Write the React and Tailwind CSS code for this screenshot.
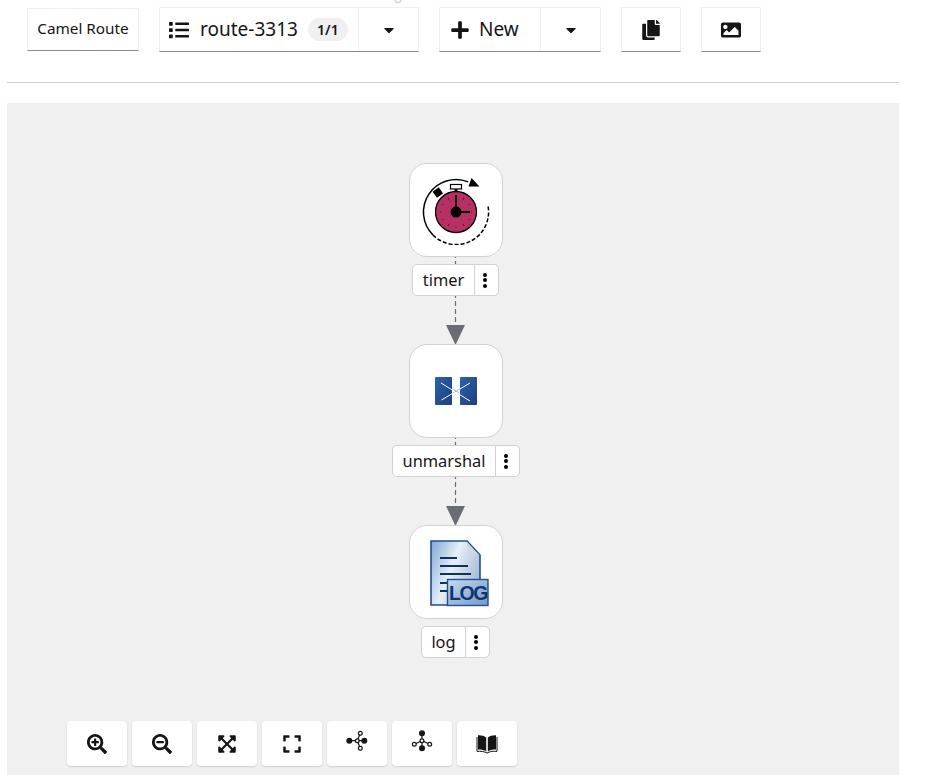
import React from 'react';
import {
  FaList,
  FaCaretDown,
  FaPlus,
  FaCopy,
  FaImage,
  FaSearchPlus,
  FaSearchMinus,
  FaExpandArrowsAlt,
  FaExpand,
} from 'react-icons/fa';

const TimerIcon = () => (
  <svg width="70" height="70" viewBox="0 0 70 70" fill="none">
    <path d="M47.2 6.9 A32.5 32.5 0 0 0 12 60" stroke="#000" strokeWidth="1.5" />
    <path d="M12 60 A32.5 32.5 0 0 0 67 31" stroke="#000" strokeWidth="1.5" strokeDasharray="4 2" />
    <polygon points="58.5,11.5 50.5,3 47.5,11.5" fill="#000" />
    <rect x="29.5" y="9.5" width="11" height="4.5" fill="#fff" stroke="#000" strokeWidth="1.2" />
    <rect x="33.5" y="14" width="3" height="3" fill="#000" />
    <rect x="13" y="14" width="7.5" height="7.5" fill="#000" transform="rotate(-35 16.5 17.5)" />
    <circle cx="35" cy="37" r="20.5" fill="#b83063" stroke="#000" strokeWidth="1.3" />
    <path d="M19 37h1.5M49.5 37h1.5M27 23l1 2M43 23l-1 2M27 51l1-2M43 51l-1-2M21 29l1.5 1M49 29l-1.5 1M21 45l1.5-1M49 45l-1.5-1M35 51.5v1.5" stroke="#3a0d20" strokeWidth="0.7" />
    <path d="M35 37V20M35 37H49" stroke="#000" strokeWidth="1.8" />
    <circle cx="35" cy="37" r="5.5" fill="#000" />
  </svg>
);

const UnmarshalIcon = () => (
  <svg width="42" height="28" viewBox="0 0 42 28" fill="none">
    <defs>
      <linearGradient id="um" x1="0" y1="0" x2="1" y2="1">
        <stop offset="0" stopColor="#2b62ae" />
        <stop offset="1" stopColor="#1c3f80" />
      </linearGradient>
    </defs>
    <rect x="0" y="0" width="17" height="28" rx="1" fill="url(#um)" />
    <rect x="25" y="0" width="17" height="28" rx="1" fill="url(#um)" />
    <path d="M6 6L35 24M35 6L6.5 23" stroke="#fff" strokeWidth="1" />
    <path d="M17.5 12l7 4M24.5 12l-7 4" stroke="#5b86c4" strokeWidth="1" strokeDasharray="1 1" />
  </svg>
);

const LogIcon = () => (
  <svg width="60" height="68" viewBox="0 0 60 68" fill="none" className="ml-[8px] mt-[1px]">
    <defs>
      <linearGradient id="doc" x1="0" y1="0" x2="1" y2="0.5">
        <stop offset="0" stopColor="#7fa6d3" />
        <stop offset="0.5" stopColor="#e6f0f9" />
        <stop offset="1" stopColor="#a9bdd4" />
      </linearGradient>
      <linearGradient id="tag" x1="0" y1="0" x2="1" y2="1">
        <stop offset="0" stopColor="#c6daef" />
        <stop offset="1" stopColor="#7399c6" />
      </linearGradient>
    </defs>
    <path d="M1 2H37L50 16V66H1Z" fill="url(#doc)" stroke="#1f4f94" strokeWidth="1.6" />
    <path d="M37 3V11Q38 16 49 16" fill="#cfd9e4" />
    <path d="M10 19H27M10 27H38M10 35H41M10 44H22M10 52H22" stroke="#12305f" strokeWidth="2" />
    <rect x="17.5" y="40.5" width="40.5" height="26" fill="url(#tag)" stroke="#1f4f94" strokeWidth="1.4" />
    <text x="38" y="61" textAnchor="middle" fontFamily="'Liberation Sans', sans-serif" fontWeight="700" fontSize="19.5" fill="#0f3670" letterSpacing="-1.4">LOG</text>
  </svg>
);

// the two layout buttons in the canvas controls
const LayoutHorizontalIcon = () => (
  <svg width="22" height="22" viewBox="0 0 22 22" fill="none" stroke="#151515" strokeWidth="1.2" className="mb-[5px]">
    <path d="M3.3 10.7H18.3M11.3 10.7L14.3 3.3M11.3 10.7L14.3 18.3" />
    <circle cx="3.3" cy="10.7" r="2.4" fill="#151515" />
    <circle cx="18.3" cy="10.7" r="2.4" fill="#151515" />
    <circle cx="11.3" cy="10.7" r="1.9" fill="#fff" />
    <circle cx="14.3" cy="3.3" r="1.9" fill="#fff" />
    <circle cx="14.3" cy="18.3" r="1.9" fill="#fff" />
  </svg>
);

const LayoutVerticalIcon = () => (
  <svg width="22" height="22" viewBox="0 0 22 22" fill="none" stroke="#151515" strokeWidth="1.2" className="mb-[5px]">
    <path d="M11 3.3V18.3M11 10.7L3.3 14.3M11 10.7L18.7 14.3" />
    <circle cx="11" cy="3.3" r="2.4" fill="#151515" />
    <circle cx="11" cy="18.3" r="2.4" fill="#151515" />
    <circle cx="11" cy="10.7" r="1.9" fill="#fff" />
    <circle cx="3.3" cy="14.3" r="1.9" fill="#fff" />
    <circle cx="18.7" cy="14.3" r="1.9" fill="#fff" />
  </svg>
);

const BookIcon = () => (
  <svg width="22" height="20" viewBox="0 0 22 20" fill="none">
    <path d="M10.2 3.5C8 1.6 5 1 2 1.2V15.5C5 15.4 8 16 10.2 17.5Z" fill="#151515" />
    <path d="M11.8 3.5C14 1.6 17 1 20 1.2V15.5C17 15.4 14 16 11.8 17.5Z" fill="#151515" />
    <path d="M1 3V17.4C4.5 17 8 17.4 11 19C14 17.4 17.5 17 21 17.4V3" stroke="#151515" strokeWidth="1" />
  </svg>
);

const KebabDots = () => (
  <span className="flex flex-col gap-[1.5px]">
    <span className="w-[4px] h-[4px] rounded-full bg-black" />
    <span className="w-[4px] h-[4px] rounded-full bg-black" />
    <span className="w-[4px] h-[4px] rounded-full bg-black" />
  </span>
);

const NodeLabel = ({ name, className }) => (
  <div className={`absolute h-[32px] flex bg-white border border-[#d2d2d2] rounded-[5px] text-[16.4px] text-[#151515] ${className}`}>
    <span className="flex-1 flex items-center justify-center leading-none">{name}</span>
    <span className="w-[24px] pr-[3px] flex items-center justify-center border-l border-[#d2d2d2]">
      <KebabDots />
    </span>
  </div>
);

const NodeBox = ({ className, children }) => (
  <div className={`absolute w-[94px] h-[94px] bg-white border-[1.5px] border-[#d2d2d2] rounded-[18px] flex items-center justify-center ${className}`}>
    {children}
  </div>
);

const ToolButton = ({ className, children }) => (
  <div className={`h-[45px] flex bg-white border border-[#f0f0f0] border-b-[#8a8d90] text-[#151515] ${className}`}>
    {children}
  </div>
);

const Control = ({ children }) => (
  <button type="button" className="w-[60px] h-[45px] flex items-center justify-center bg-white rounded-[4px] shadow-[0_1px_2px_rgba(3,3,3,0.14)] text-[#151515]">
    {children}
  </button>
);

export default function App() {
  return (
    <div className="relative w-[926px] h-[775px] overflow-hidden bg-white font-['Noto_Sans',sans-serif]">
      <div className="absolute left-[394px] top-[-5px] w-[8px] h-[8px] rounded-full bg-white border border-[#bbbbbb]" />

      <div className="h-[82px] pl-[27px] pt-[7px] flex items-start gap-[20px] text-[19px]">
        <div className="mt-px w-[112px] h-[43px] pb-[2px] flex items-center justify-center bg-white border border-[#f0f0f0] border-b-[#8a8d90] text-[15.3px] text-[#151515]">
          Camel Route
        </div>

        <ToolButton className="w-[260px]">
          <div className="w-[199px] flex items-center border-r border-[#f0f0f0] pl-[9px]">
            <FaList className="text-[20px] text-[#151515] shrink-0" />
            <span className="ml-[11px]">route-3313</span>
            <span className="ml-[10px] w-[40px] h-[23px] flex items-center justify-center rounded-full bg-[#f0f0f0] text-[14px] font-semibold">1/1</span>
          </div>
          <div className="flex-1 flex items-center justify-center">
            <FaCaretDown className="text-[16px]" />
          </div>
        </ToolButton>

        <ToolButton className="w-[162px]">
          <div className="w-[101px] flex items-center border-r border-[#f0f0f0] pl-[10px]">
            <FaPlus className="text-[20px] shrink-0" />
            <span className="ml-[9px]">New</span>
          </div>
          <div className="flex-1 flex items-center justify-center">
            <FaCaretDown className="text-[16px]" />
          </div>
        </ToolButton>

        <ToolButton className="w-[60px] items-center justify-center">
          <FaCopy className="text-[20px]" />
        </ToolButton>

        <ToolButton className="w-[60px] items-center justify-center">
          <FaImage className="text-[20px]" />
        </ToolButton>
      </div>

      <div className="ml-[7px] w-[892px] border-t border-[#d2d2d2]" />

      <div className="relative mt-[20px] ml-[7px] w-[892px] h-[672px] bg-[#f0f0f0]">
        <svg className="absolute left-[430px] top-[150px]" width="40" height="430" viewBox="0 0 40 430" fill="none">
          <path d="M18.5 0V72M18.5 181V253" stroke="#6a6e73" strokeWidth="1.2" strokeDasharray="5 3" />
          <polygon points="9,72 28,72 18.5,92" fill="#6a6e73" />
          <polygon points="9,253 28,253 18.5,273" fill="#6a6e73" />
        </svg>

        <NodeBox className="left-[401.5px] top-[60px]"><TimerIcon /></NodeBox>
        <NodeLabel name="timer" className="left-[405px] top-[161px] w-[87px]" />

        <NodeBox className="left-[401.5px] top-[241px]"><UnmarshalIcon /></NodeBox>
        <NodeLabel name="unmarshal" className="left-[385px] top-[342px] w-[128px]" />

        <NodeBox className="left-[401.5px] top-[422px]"><LogIcon /></NodeBox>
        <NodeLabel name="log" className="left-[414px] top-[523px] w-[69px]" />

        <div className="absolute left-[60px] top-[618px] flex gap-[5px]">
          <Control><FaSearchPlus className="text-[20px]" /></Control>
          <Control><FaSearchMinus className="text-[20px]" /></Control>
          <Control><FaExpandArrowsAlt className="text-[20px]" /></Control>
          <Control><FaExpand className="text-[20px]" /></Control>
          <Control><LayoutHorizontalIcon /></Control>
          <Control><LayoutVerticalIcon /></Control>
          <Control><BookIcon /></Control>
        </div>
      </div>
    </div>
  );
}
